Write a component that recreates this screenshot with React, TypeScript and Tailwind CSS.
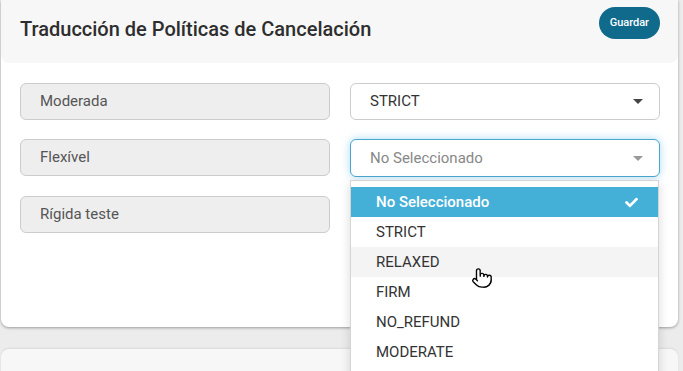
import { FaCheck } from "react-icons/fa";
import { Pointer } from "lucide-react";

const opciones = ["No Seleccionado", "STRICT", "RELAXED", "FIRM", "NO_REFUND", "MODERATE"];

function Caret({ light }: { light?: boolean }) {
  return (
    <span
      className={
        "h-0 w-0 border-x-[5px] border-t-[5px] border-x-transparent " +
        (light ? "border-t-[#999]" : "border-t-[#444]")
      }
    />
  );
}

export default function App() {
  return (
    <div className="min-h-screen bg-[#ececec] font-['Roboto',sans-serif] pl-[1px] pr-[5px] overflow-hidden">
      {/* tarjeta principal */}
      <div className="relative h-[327px] rounded-b-lg bg-white shadow-[0_1px_3px_rgba(0,0,0,0.35)]">
        <div className="flex h-[63px] items-start justify-between rounded-b-lg bg-[#f7f7f7] pl-[19px] pr-[18px]">
          <h1 className="mt-[15px] text-[20px] font-medium leading-[28px] text-[#2e2e2e]">
            Traducción de Políticas de Cancelación
          </h1>
          <button className="mt-[7px] h-[32px] rounded-full bg-[#106a8c] px-[11px] text-[11px] font-medium text-white">
            Guardar
          </button>
        </div>

        <div className="grid grid-cols-2 gap-x-[20px] gap-y-[19px] pl-[19px] pr-[18px] pt-[20px]">
          <div className="flex h-[37px] items-center rounded-[6px] border border-[#cccccc] bg-[#eeeeee] px-[19px] text-[15px] text-[#555]">
            Moderada
          </div>
          <div className="flex h-[37px] items-center justify-between rounded-[6px] border border-[#cccccc] bg-white pl-[19px] pr-[16px] text-[15px] text-[#333]">
            STRICT
            <Caret />
          </div>

          <div className="flex h-[37px] items-center rounded-[6px] border border-[#cccccc] bg-[#eeeeee] px-[19px] text-[15px] text-[#555]">
            Flexível
          </div>
          <div className="relative">
            <div className="flex h-[38px] items-center justify-between rounded-[6px] border border-[#49a6cc] bg-white pl-[19px] pr-[16px] text-[15px] text-[#888] shadow-[0_0_8px_rgba(102,190,233,0.55)]">
              No Seleccionado
              <Caret light />
            </div>
            <ul className="absolute left-0 right-[1px] top-[41px] z-10 h-[200px] border border-[#d5d5d5] bg-white pt-[6px] text-[15px] text-[#333] shadow-[0_4px_10px_rgba(0,0,0,0.15)]">
              {opciones.map((o, i) => (
                <li
                  key={o}
                  className={
                    "flex h-[30px] items-center justify-between pl-[25px] pr-[20px] " +
                    (i === 0 ? "bg-[#45b0d7] font-medium text-white" : i === 2 ? "bg-[#f4f4f4]" : "")
                  }
                >
                  {o}
                  {i === 0 && <FaCheck className="h-[13px] w-[13px]" />}
                </li>
              ))}
            </ul>
            <Pointer
              className="absolute left-[121px] top-[128px] z-20 h-[22px] w-[22px]"
              fill="white"
              stroke="black"
              strokeWidth={1.5}
            />
          </div>

          <div className="flex h-[37px] items-center rounded-[6px] border border-[#cccccc] bg-[#eeeeee] px-[19px] text-[15px] text-[#555]">
            Rígida teste
          </div>
          <div />
        </div>
      </div>

      {/* siguiente tarjeta */}
      <div className="mt-[22px] h-[60px] rounded-t-lg bg-[#f7f7f7] shadow-[0_-1px_2px_rgba(0,0,0,0.08)]" />
    </div>
  );
}
